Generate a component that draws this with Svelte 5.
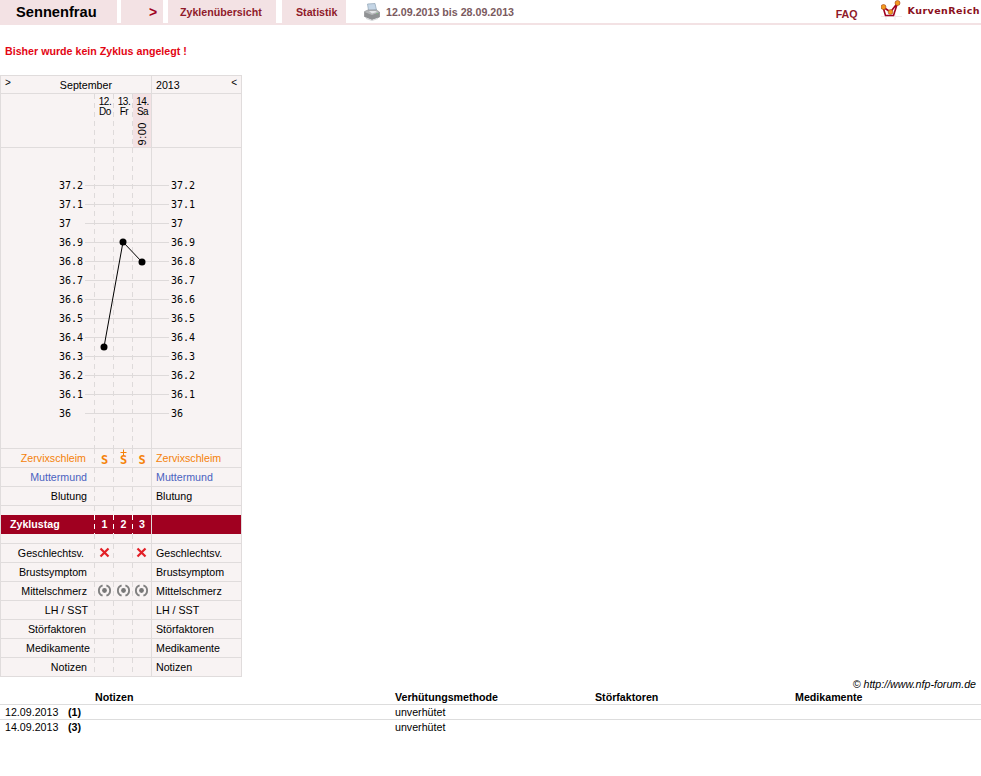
<script>
  const temps = ['37.2','37.1','37','36.9','36.8','36.7','36.6','36.5','36.4','36.3','36.2','36.1','36'];
  const upper = [
    { label: 'Zervixschleim', cls: 'orange', kind: 's', pad: 1 },
    { label: 'Muttermund', cls: 'blue' },
    { label: 'Blutung', cls: '' }
  ];
  const lower = [
    { label: 'Geschlechtsv.', kind: 'x', pad: 3 },
    { label: 'Brustsymptom' },
    { label: 'Mittelschmerz', kind: 'pain' },
    { label: 'LH / SST', pad: -1 },
    { label: 'Störfaktoren', pad: 1 },
    { label: 'Medikamente', pad: -3 },
    { label: 'Notizen' }
  ];
  const days = [
    { d: '12.', w: 'Do' },
    { d: '13.', w: 'Fr' },
    { d: '14.', w: 'Sa', time: '9:00' }
  ];
  const notes = [
    { date: '12.09.2013', n: '(1)' },
    { date: '14.09.2013', n: '(3)' }
  ];
  const points = '104,199 123,94 142,114';
</script>

<header class="top">
  <div class="tab name">Sennenfrau</div>
  <div class="tab arrow">&gt;</div>
  <div class="tab overview">Zyklenübersicht</div>
  <div class="tab stats">Statistik</div>
  <svg class="printer" width="18" height="18" viewBox="0 0 18 18" aria-hidden="true">
    <path d="M4.5 1 L12 .5 L13.5 7 L5.5 7.5 Z" fill="#c5d6e6" stroke="#8fa3b5" stroke-width=".7"/>
    <path d="M1.5 8.5 L5 7 H13.5 L16.5 9 V14 L9 16.5 L1.5 13.5 Z" fill="#b4b6b8" stroke="#8a8c8e" stroke-width=".6"/>
    <path d="M1.5 9 L9 12 L16.5 9.2 V14 L9 16.8 L1.5 13.7 Z" fill="#8f9193"/>
    <path d="M3 14.5 L9 17 L15 14.7 L15 16 L9 18 L3 16 Z" fill="#d6d8da"/>
    <path d="M6 8 H12.5 L14 9 L9 10.5 Z" fill="#e4e6e8"/>
    <rect x="13.5" y="10" width="1.5" height="1" fill="#7fb77f"/>
  </svg>
  <div class="range">12.09.2013 bis 28.09.2013</div>
  <div class="right">
    <span class="faq">FAQ</span>
    <svg class="crown" width="21" height="20" viewBox="0 0 21 20" aria-hidden="true">
      <path d="M0 16.5 H21 M5 13 V20 M14 13 V20" stroke="#eee9e9" stroke-width="1" fill="none"/>
      <path d="M2 7 L4.5 15.5 H12.5 L16.5 3 L9.5 12 L2 7 Z" fill="#fff" stroke="#a00020" stroke-width="1.6" stroke-linejoin="round"/>
      <circle cx="2.5" cy="7" r="2.5" fill="#f39a1e" stroke="#a0401c" stroke-width=".6"/>
      <circle cx="9.5" cy="12" r="2.4" fill="#f39a1e" stroke="#a0401c" stroke-width=".6"/>
      <circle cx="16.5" cy="3" r="2.5" fill="#f39a1e" stroke="#a0401c" stroke-width=".6"/>
    </svg>
    <span class="brand">KurvenReich</span>
  </div>
</header>

<p class="msg">Bisher wurde kein Zyklus angelegt !</p>

<section class="chart">
  <div class="row head1">
    <div class="month"><span class="nav">&gt;</span><span class="mname">September</span></div>
    <div class="year"><span>2013</span><span class="nav">&lt;</span></div>
  </div>

  <div class="row head2">
    <div class="c l"></div>
    {#each days as day, i}
      <div class="c day" class:today={day.time} class:end={i === 2}>
        <span>{day.d}</span><span>{day.w}</span>
        {#if day.time}<span class="time">{day.time}</span>{/if}
      </div>
    {/each}
    <div class="c r"></div>
  </div>

  <div class="row temp">
    <div class="c l"></div>
    <div class="c"></div><div class="c"></div><div class="c end"></div>
    <div class="c r"></div>
    <svg class="plot" width="242" height="300" viewBox="0 0 242 300" aria-hidden="true">
      {#each temps as t, i}
        <line x1="85" x2="169" y1={37.5 + i * 19} y2={37.5 + i * 19} stroke="#dedada"/>
        <text x="59" y={41 + i * 19}>{t}</text>
        <text x="171" y={41 + i * 19}>{t}</text>
      {/each}
      <polyline points={points} fill="none" stroke="#000" stroke-width="1"/>
      <circle cx="104" cy="199" r="3.5"/>
      <circle cx="123" cy="94" r="3.5"/>
      <circle cx="142" cy="114" r="3.5"/>
    </svg>
  </div>

  {#each upper as row}
    <div class="row line {row.cls}">
      <div class="c l" style:padding-right="{8 + (row.pad ?? 0)}px">{row.label}</div>
      {#each [0, 1, 2] as i}
        <div class="c mark" class:end={i === 2}>
          {#if row.kind === 's'}
            <span class="s">S{#if i === 1}<svg class="plus" width="7" height="7" viewBox="0 0 7 7" aria-hidden="true"><path d="M0.5 3.5 H6.5 M3.5 0.5 V6.5" stroke="#f5820a" stroke-width="1"/></svg>{/if}</span>
          {/if}
        </div>
      {/each}
      <div class="c r">{row.label}</div>
    </div>
  {/each}

  <div class="row spacer">
    <div class="c l"></div><div class="c"></div><div class="c"></div><div class="c end"></div><div class="c r"></div>
  </div>

  <div class="row cycle">
    <div class="c l">Zyklustag</div>
    {#each [1, 2, 3] as n}
      <div class="c mark" class:end={n === 3}>{n}</div>
    {/each}
    <div class="c r"></div>
  </div>

  <div class="row spacer last">
    <div class="c l"></div><div class="c"></div><div class="c"></div><div class="c end"></div><div class="c r"></div>
  </div>

  {#each lower as row}
    <div class="row line">
      <div class="c l" style:padding-right="{8 + (row.pad ?? 0)}px">{row.label}</div>
      {#each [0, 1, 2] as i}
        <div class="c mark" class:end={i === 2}>
          {#if row.kind === 'x' && i !== 1}
            <svg class="shift" width="11" height="11" viewBox="0 0 11 11" aria-hidden="true">
              <path d="M1.5 1.5 L9.5 9.5 M9.5 1.5 L1.5 9.5" stroke="#e21f26" stroke-width="2.2"/>
            </svg>
          {:else if row.kind === 'pain'}
            <svg class="shift" width="15" height="15" viewBox="0 0 15 15" aria-hidden="true">
              <circle cx="7.5" cy="7.5" r="2.4" fill="#777"/>
              <path d="M5.6 2.3 A5.5 5.5 0 0 0 5.6 12.7 M9.4 2.3 A5.5 5.5 0 0 1 9.4 12.7" stroke="#808080" stroke-width="1.9" fill="none"/>
            </svg>
          {/if}
        </div>
      {/each}
      <div class="c r">{row.label}</div>
    </div>
  {/each}
</section>

<p class="copy">© http://www.nfp-forum.de</p>

<section class="notes">
  <div class="nrow nhead">
    <div class="first">Notizen</div>
    <div>Verhütungsmethode</div>
    <div>Störfaktoren</div>
    <div>Medikamente</div>
  </div>
  {#each notes as note, i}
    <div class="nrow" class:plain={i === notes.length - 1}>
      <div class="entry"><span class="date">{note.date}</span><b>{note.n}</b></div>
      <div>unverhütet</div>
      <div></div>
      <div></div>
    </div>
  {/each}
</section>

<style>
  :global(body) {
    margin: 0;
    background: #fff;
    font-family: "Liberation Sans", Arial, sans-serif;
    font-size: 8pt;
    color: #000;
  }
  .top {
    display: flex;
    height: 23px;
    border-bottom: 2px solid #f3e2e4;
    font-weight: bold;
    line-height: 25px;
  }
  .tab {
    background: #f3e2e4;
    color: #8f1a2a;
    box-sizing: border-box;
  }
  .name {
    width: 117px;
    padding-left: 16px;
    color: #000;
    font-size: 11pt;
  }
  .arrow {
    width: 42px;
    margin-left: 4px;
    padding-left: 28px;
    font-size: 14px;
    color: #a00020;
  }
  .overview {
    width: 108px;
    margin-left: 5px;
    padding-left: 12px;
  }
  .stats {
    width: 64px;
    margin-left: 6px;
    padding-left: 14px;
  }
  .printer {
    margin: 3px 0 0 17px;
  }
  .range {
    margin-left: 5px;
    color: #7a5a5e;
  }
  .right {
    display: flex;
    margin-left: auto;
    padding-right: 1px;
  }
  .faq {
    color: #8f1a2a;
    line-height: 29px;
  }
  .crown {
    margin: 0 0 0 23px;
  }
  .brand {
    margin-left: 6px;
    font-family: "DejaVu Sans", sans-serif;
    font-size: 9.5px;
    letter-spacing: .45px;
    color: #8b1020;
    line-height: 21px;
  }
  .msg {
    margin: 20px 0 18px 5px;
    height: 12px;
    line-height: 12px;
    font-weight: bold;
    color: #e30613;
  }
  .chart {
    width: 242px;
    box-sizing: border-box;
    border-top: 1px solid #e0dcdc;
    background: #f8f3f3;
  }
  .row {
    display: grid;
    grid-template-columns: 95px 19px 19px 19px 90px;
    position: relative;
    box-sizing: border-box;
    border-bottom: 1px solid #e0dcdc;
  }
  .c {
    box-sizing: border-box;
    background-image: repeating-linear-gradient(#dedada 0 5px, transparent 5px 9px);
    background-size: 1px 100%;
    background-position: right top;
    background-repeat: no-repeat;
  }
  .c.l {
    border-left: 1px solid #e0dcdc;
    text-align: right;
    padding-right: 8px;
  }
  .c.r {
    background-image: none;
    border-right: 1px solid #e0dcdc;
    padding-left: 4px;
  }
  .c.end {
    background-image: none;
    border-right: 1px solid #e0dcdc;
  }
  .head1 {
    display: flex;
    height: 18px;
    line-height: 18px;
  }
  .month {
    width: 152px;
    box-sizing: border-box;
    border-left: 1px solid #e0dcdc;
    border-right: 1px solid #e0dcdc;
    display: flex;
    align-items: flex-start;
  }
  .mname {
    margin-left: 49px;
    line-height: 19px;
  }
  .year {
    flex: 1;
    display: flex;
    justify-content: space-between;
    align-items: flex-start;
    padding: 0 4px;
    border-right: 1px solid #e0dcdc;
    line-height: 19px;
  }
  .nav {
    font-size: 10px;
    line-height: 14px;
  }
  .month .nav {
    margin-left: 4px;
  }
  .head2 {
    height: 54px;
  }
  .day {
    display: flex;
    flex-direction: column;
    align-items: center;
    font-size: 10px;
    letter-spacing: -.5px;
    line-height: 10px;
    padding: 3px 0 0 1px;
    position: relative;
  }
  .today {
    background-color: #f3e2e4;
  }
  .time {
    position: absolute;
    bottom: 2px;
    left: 3px;
    writing-mode: vertical-rl;
    transform: rotate(180deg);
    font-size: 11px;
    letter-spacing: .5px;
    line-height: 13px;
  }
  .temp {
    height: 301px;
  }
  .plot {
    position: absolute;
    left: 0;
    top: 0;
  }
  .plot text {
    font-family: "DejaVu Sans Mono", monospace;
    font-size: 10px;
  }
  .line {
    height: 19px;
    line-height: 18px;
  }
  .orange {
    color: #f5820a;
  }
  .blue {
    color: #4a62c0;
  }
  .mark {
    display: flex;
    align-items: center;
    justify-content: center;
  }
  .s {
    position: relative;
    font-family: "DejaVu Sans Mono", monospace;
    font-weight: bold;
    font-size: 12px;
    line-height: 12px;
    margin-top: 3px;
  }
  .plus {
    position: absolute;
    top: -5px;
    left: 0;
  }
  .shift {
    margin: -1px 1px 0 0;
  }
  .spacer {
    height: 9px;
    border-bottom: 0;
  }
  .spacer.last {
    height: 10px;
    border-bottom: 1px solid #e0dcdc;
  }
  .cycle {
    height: 19px;
    line-height: 19px;
    background: #a00020;
    color: #fff;
    font-weight: bold;
    border-bottom: 0;
  }
  .cycle .c {
    background-image: repeating-linear-gradient(#fff 0 5px, transparent 5px 9px);
  }
  .cycle .c.l {
    text-align: left;
    padding-left: 9px;
  }
  .cycle .c.end, .cycle .c.r {
    background-image: none;
    border-right-color: #e0dcdc;
  }
  .copy {
    margin: 1px 5px 0 0;
    height: 13px;
    line-height: 13px;
    text-align: right;
    font-style: italic;
  }
  .notes {
    width: 100%;
  }
  .nrow {
    display: grid;
    grid-template-columns: 395px 200px 200px 1fr;
    height: 15px;
    line-height: 14px;
    box-sizing: border-box;
    border-bottom: 1px solid #ddd;
  }
  .nhead {
    height: 14px;
    line-height: 13px;
    font-weight: bold;
  }
  .plain {
    border-bottom: 0;
  }
  .first {
    padding-left: 95px;
  }
  .entry {
    display: flex;
  }
  .date {
    width: 63px;
    margin-left: 5px;
  }
</style>
